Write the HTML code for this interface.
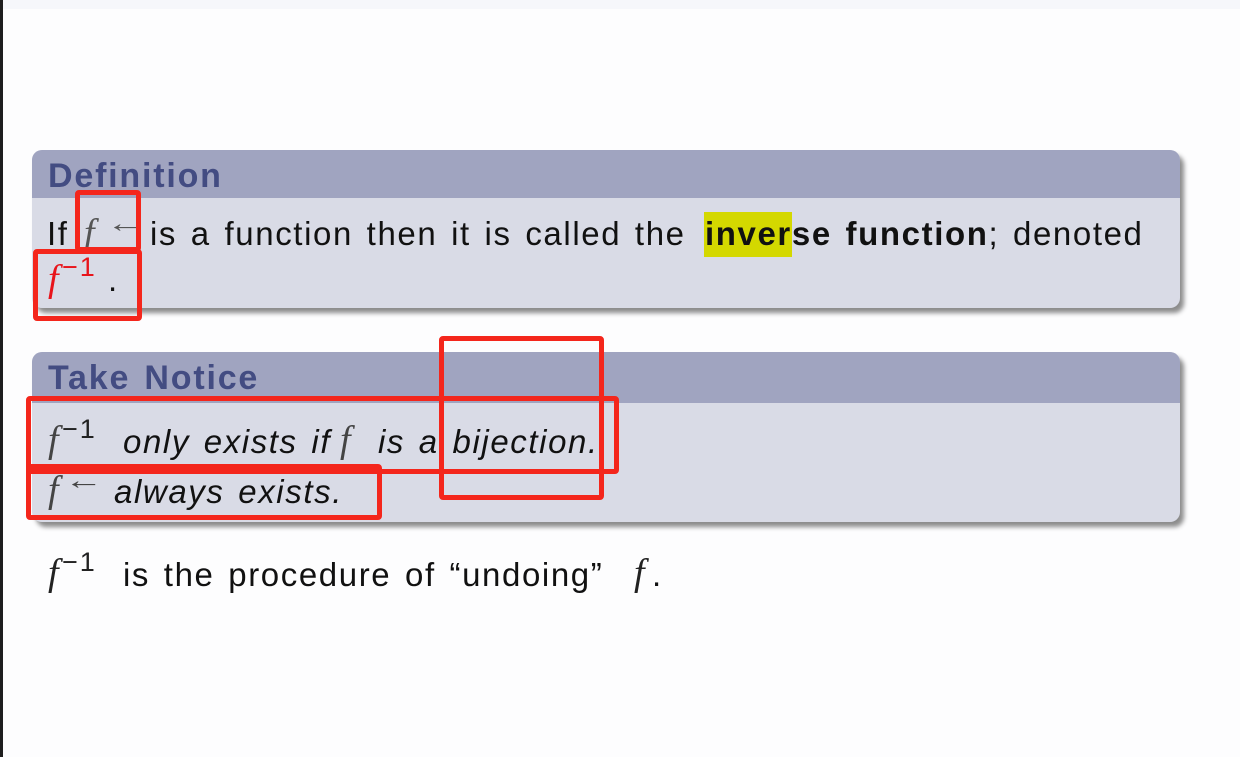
<!DOCTYPE html>
<html><head><style>
body{margin:0;width:1240px;height:757px;background:#fdfdfe;position:relative;overflow:hidden;font-family:"Liberation Sans",sans-serif;}
.bar{position:absolute;left:0;top:0;width:3px;height:757px;background:#1e1e1e}
.top{position:absolute;left:3px;top:0;right:0;height:9px;background:#f6f7fb}
.box{position:absolute;left:32px;width:1148px;border-radius:10px;background:#d9dbe6;box-shadow:4px 5px 5px rgba(0,0,0,.45);overflow:hidden}
.hd{position:absolute;left:0;top:0;right:0;background:#a0a4c0}
.t{position:absolute;white-space:nowrap;font-size:33px;color:#111;line-height:1;letter-spacing:1.6px;word-spacing:3px}
.h{font-weight:bold;color:#434c82;font-size:34px;letter-spacing:1.8px}
.m{position:absolute;font-family:"Liberation Serif",serif;font-style:italic;font-size:38px;line-height:1;color:#444}
.s{position:absolute;font-size:27px;line-height:1;white-space:nowrap;letter-spacing:2px}
.a{position:absolute;font-size:26px;line-height:1;transform:scaleX(1.5);transform-origin:left}
.r{position:absolute;border:5px solid #f4261c;border-radius:4px;box-sizing:border-box}
.i{font-style:italic}
</style></head><body>
<div class="bar"></div><div class="top"></div>
<div class="box" style="top:150px;height:158px"><div class="hd" style="height:48px"></div></div>
<div class="box" style="top:352px;height:170px"><div class="hd" style="height:51px"></div></div>
<div style="position:absolute;left:704px;top:212px;width:88px;height:45px;background:#d4d800"></div>
<div class="t h" style="left:48px;top:159px">Definition</div>

<div class="t" style="left:47px;top:217px">If</div>
<div class="m" style="left:84px;top:214px;color:#555">f</div>
<div class="a" style="left:106px;top:210px;color:#555">←</div>
<div class="t" style="left:150px;top:217px">is a function then it is called the</div>
<div class="t" style="left:705px;top:217px"><b>inverse function</b>; denoted</div>

<div class="m" style="left:48px;top:260px;color:#e8141b">f</div>
<div class="s" style="left:62px;top:254px;color:#e8141b">−1</div>
<div class="t" style="left:108px;top:263px">.</div>

<div class="t h" style="left:48px;top:361px">Take Notice</div>
<div class="m" style="left:48px;top:421px">f</div>
<div class="s" style="left:62px;top:416px;color:#222">−1</div>
<div class="t i" style="left:123px;top:425px">only exists if</div>
<div class="m" style="left:340px;top:421px">f</div>
<div class="t i" style="left:378px;top:425px">is a bijection.</div>

<div class="m" style="left:48px;top:471px">f</div>
<div class="a" style="left:64px;top:467px;color:#444">←</div>
<div class="t i" style="left:114px;top:475px">always exists.</div>

<div class="m" style="left:48px;top:554px;color:#222">f</div>
<div class="s" style="left:62px;top:549px;color:#222">−1</div>
<div class="t" style="left:123px;top:558px">is the procedure of “undoing”</div>
<div class="m" style="left:634px;top:554px;color:#222">f</div>
<div class="t" style="left:652px;top:558px">.</div>

<div class="r" style="left:75px;top:190px;width:66px;height:62px"></div>
<div class="r" style="left:33px;top:249px;width:109px;height:72px"></div>
<div class="r" style="left:439px;top:336px;width:165px;height:164px"></div>
<div class="r" style="left:26px;top:396px;width:593px;height:78px"></div>
<div class="r" style="left:26px;top:464px;width:356px;height:56px"></div>
</body></html>
